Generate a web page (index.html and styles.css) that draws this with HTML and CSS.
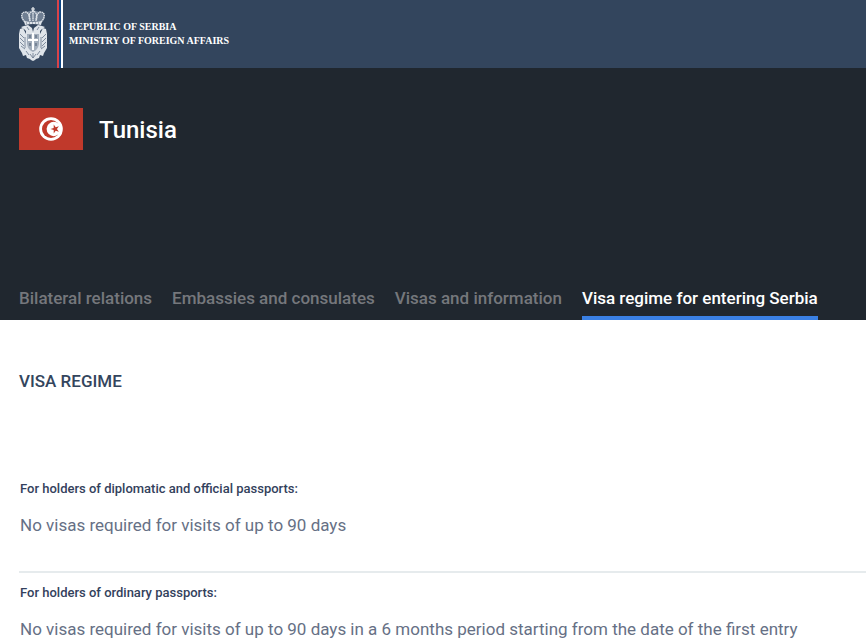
FILE: index.html
```html
<!DOCTYPE html>
<html lang="en">
  <head>
    <meta charset="utf-8" />
    <title>Tunisia | Visa regime for entering Serbia</title>
    <meta name="viewport" content="width=device-width, initial-scale=1.0" />
    <link rel="stylesheet" href="styles.css">
  </head>
  <body>
    <header class="topbar">
      <a class="brand" href="#">
        <svg class="emblem" viewBox="0 0 30 56" width="30" height="56" aria-hidden="true">
          <!-- crown -->
          <path fill="#6f7e92" d="M7 17C2 12 3 7 8 6l7-2 7 2c5 1 6 6 1 11z"/>
          <g fill="none" stroke="#dfe4ea" stroke-width="1.4" stroke-dasharray="1.6 .5">
            <path d="M7 16C2 11 3 6 8 6c3 1 4 5 4 9M23 16c5-5 4-10-1-10-3 1-4 5-4 9"/>
            <path d="M12 15c-2-6 0-9 3-10 3 1 5 4 3 10M15 5v10"/>
          </g>
          <path stroke="#f2f4f6" stroke-width="1.2" d="M15 1v4M13 3h4"/>
          <path fill="#dfe4ea" d="M6 15q9 2 18 0l-1 4q-8-2-16 0z"/>
          <path stroke="#33455d" stroke-width=".7" stroke-dasharray="1 2" d="M8 17h14"/>
          <!-- two-headed eagle -->
          <path fill="#dfe4ea" d="M15 26l-1-4-4-3-4 1-3 1 3 2 2 2v3l-3-6-3 1-1 5v14l3 5 1 3 3-1 1 3 3 1 1 1 2 1 2-1 1-1 3-1 1-3 3 1 1-3 3-5V28l-1-5-3-1-3 6v-3l2-2 3-2-3-1-4-1-4 3z"/>
          <path fill="none" stroke="#66758a" stroke-width=".8" d="M2 28l4 4M2 32l4 4M2 36l4 4M3 40l4 3M28 28l-4 4M28 32l-4 4M28 36l-4 4M27 40l-4 3M7 31v11M23 31v11M8 45l3 4M22 45l-3 4M12 48l3 4 3-4M15 47v5M9 21l2 3M21 21l-2 3"/>
          <path fill="#a3aebc" d="M9 28h12v10q-1 6-6 8-5-2-6-8z"/>
          <path stroke="#fff" stroke-width="2" d="M15 27v17M10 34h10"/>
          <path fill="none" stroke="#4b5b71" stroke-width="1" d="M12 29v3M18 29v3M12 37v3M18 37v3"/>
        </svg>
        <span class="stripes"></span>
        <span class="brand-text">REPUBLIC OF SERBIA<br>MINISTRY OF FOREIGN AFFAIRS</span>
      </a>
    </header>

    <section class="hero">
      <div class="country">
        <svg class="flag" viewBox="0 0 64 42" width="64" height="42" role="img" aria-label="Flag of Tunisia">
          <rect width="64" height="42" fill="#c0392b"/>
          <circle cx="32" cy="21" r="11.800" fill="#fff"/>
          <circle cx="32" cy="21" r="9" fill="#c0392b"/>
          <circle cx="34.8" cy="21" r="7.200" fill="#fff"/>
          <path fill="#c0392b" d="M31.500 21l3.200-1.100v-3.400l2 2.800 3.200-1.100-2 2.800 2 2.800-3.200-1.100-2 2.800v-3.400z"/>
        </svg>
        <h1>Tunisia</h1>
      </div>
      <nav class="tabs">
        <a href="#">Bilateral relations</a>
        <a href="#">Embassies and consulates</a>
        <a href="#">Visas and information</a>
        <a class="active" href="#">Visa regime for entering Serbia</a>
      </nav>
    </section>

    <main class="content">
      <h2>VISA REGIME</h2>
      <section class="regime">
        <h3>For holders of diplomatic and official passports:</h3>
        <p>No visas required for visits of up to 90 days</p>
      </section>
      <section class="regime">
        <h3>For holders of ordinary passports:</h3>
        <p>No visas required for visits of up to 90 days in a 6 months period starting from the date of the first entry</p>
      </section>
    </main>
  </body>
</html>
```

FILE: styles.css
```css
body {
  margin: 0;
  background: #fff;
  font-family: Roboto, sans-serif;
}

a {
  text-decoration: none;
}

.topbar {
  height: 68px;
  background: #33455d;
}

.brand {
  display: inline-flex;
  align-items: center;
  height: 100%;
  padding-left: 18px;
  color: #fff;
}

.emblem {
  width: 30px;
  height: 56px;
}

.stripes {
  align-self: stretch;
  width: 6px;
  margin: 0 6px 0 9px;
  background: linear-gradient(to right, #d94348 2px, #0d4686 2px 4px, #fff 4px);
}

.brand-text {
  font-family: "Liberation Serif", serif;
  font-size: 10px;
  line-height: 14px;
  font-weight: 700;
}

.hero {
  display: flex;
  flex-direction: column;
  justify-content: space-between;
  min-height: 252px;
  padding: 40px 19px 0;
  box-sizing: border-box;
  background: #20272f;
}

.country {
  display: flex;
  align-items: center;
  gap: 16px;
}

.country h1 {
  margin: 0;
  font-size: 24px;
  line-height: 44px;
  font-weight: 500;
  color: #fff;
}

.flag {
  align-self: flex-start;
}

.tabs {
  display: flex;
  gap: 20px;
}

.tabs a {
  padding-bottom: 8px;
  border-bottom: 4px solid transparent;
  font-size: 17px;
  line-height: 20px;
  font-weight: 500;
  white-space: nowrap;
  color: #75777c;
}

.tabs .active {
  border-color: #3a80e4;
  color: #fff;
}

.content {
  padding: 51px 0 0 19px;
}

.content h2 {
  margin: 0 0 78px;
  font-size: 17px;
  line-height: 20px;
  font-weight: 500;
  color: #33455d;
}

.regime {
  padding: 10px 1px 36px;
}

.regime + .regime {
  padding-bottom: 0;
  border-top: 2px solid #e6ebed;
}

.regime h3 {
  margin: 0 0 16px;
  font-size: 13px;
  line-height: 20px;
  font-weight: 500;
  color: #33415c;
}

.regime p {
  margin: 0;
  font-size: 17px;
  line-height: 20px;
  color: #667085;
}
```
